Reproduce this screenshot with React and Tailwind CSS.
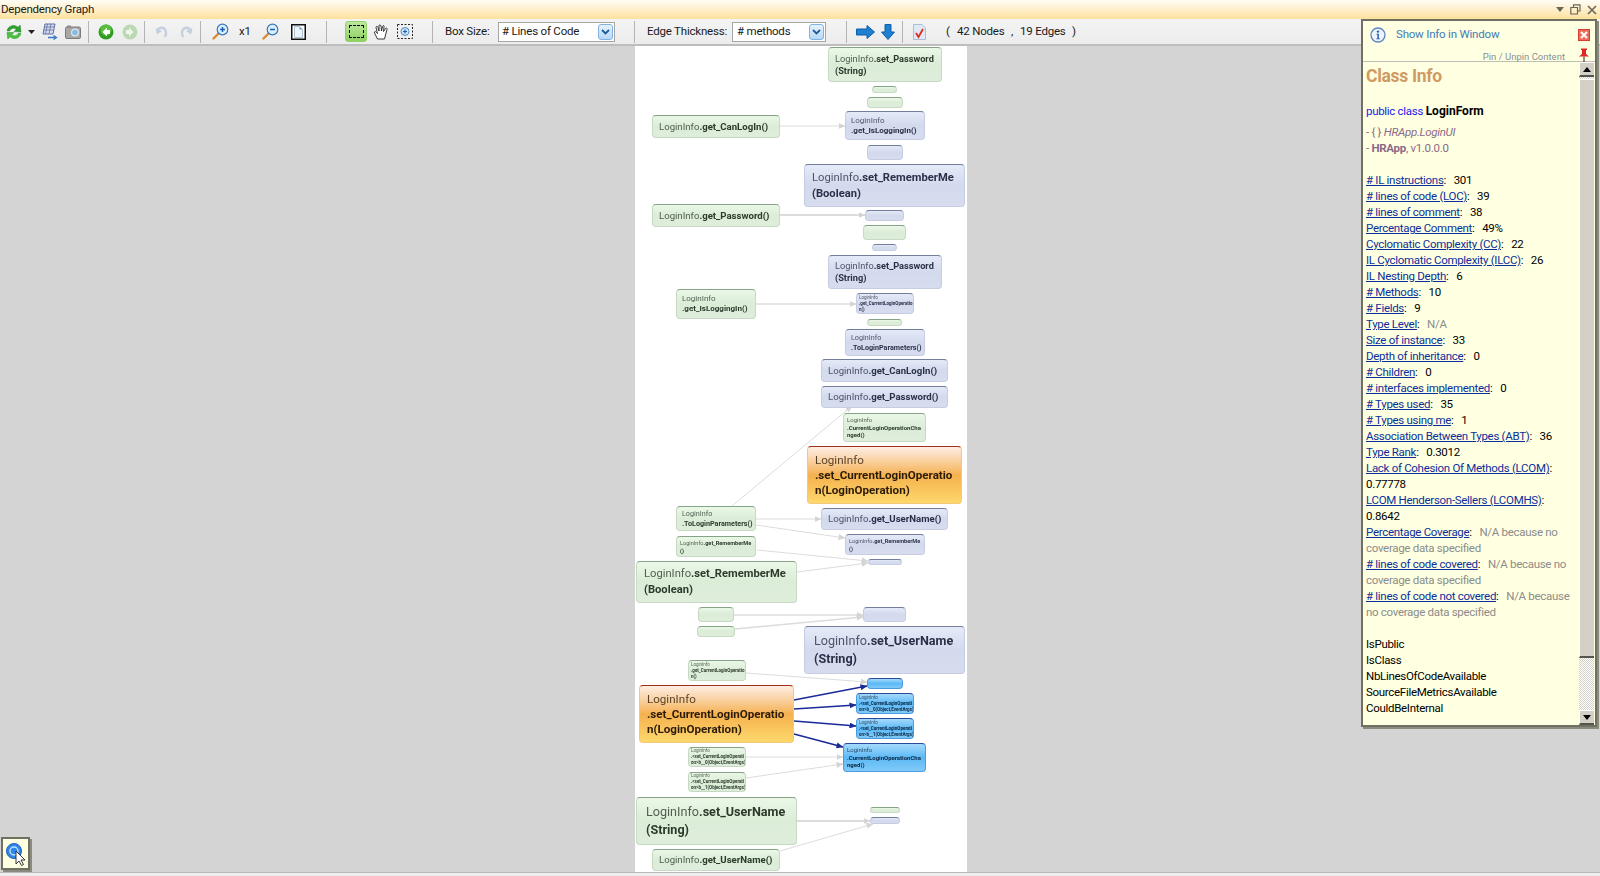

const KIND = {
  g: 'bg-linear-to-b from-[#ebf8e8] via-[#dbecd7] to-[#dfeedc] border border-[#c6dac2] border-t-[#86a386] text-[#2c3a2c]',
  b: 'bg-linear-to-b from-[#e5eaf8] via-[#d3daed] to-[#d7ddef] border border-[#c6cde3] border-t-[#737d9c] text-[#2a3048]',
  c: 'bg-linear-to-b from-[#a4dafb] via-[#5ab9f6] to-[#80caf8] border border-[#4a9be0] border-t-[#2a4a9a] text-[#0d2440]',
  o: 'bg-linear-to-b from-[#fdeee4] via-[#f5b14e] to-[#fdd86c] border border-[#f3c878] border-t-[#a0301c] text-[#2a1a08]',
};

const XL = 'text-[12.6px] leading-[18px] px-[9px]';
const L = 'text-[11.2px] leading-[16px] px-[7px]';
const O = 'text-[11.6px] leading-[15px] px-[7px]';
const M = 'text-[9.6px] leading-[12px] px-[6px]';
const P = 'text-[9.2px] leading-[12px] px-[6px]';
const S = 'text-[8px] leading-[10px] px-[5px]';
const S2 = 'text-[7.2px] leading-[10px] px-[5px]';
const T = 'text-[5.6px] leading-[8px] px-[3px]';
const U = 'text-[6px] leading-[7.5px] px-[3px]';
const V = 'text-[4.5px] leading-[6px] px-[2px]';

const nodes = [
  ['left-[828px] top-[1px] w-[114px] h-[35px]', 'g', P, 'LoginInfo.set_Password|(String)'],
  ['left-[872px] top-[40px] w-[25px] h-[7px]', 'g'],
  ['left-[867px] top-[51px] w-[36px] h-[11px]', 'g'],
  ['left-[652px] top-[69px] w-[128px] h-[23px]', 'g', M, 'LoginInfo.get_CanLogIn()'],
  ['left-[652px] top-[158px] w-[128px] h-[23px]', 'g', M, 'LoginInfo.get_Password()'],
  ['left-[863px] top-[179px] w-[43px] h-[15px]', 'g'],
  ['left-[676px] top-[243px] w-[80px] h-[30px]', 'g', S, 'LoginInfo|.get_IsLoggingIn()'],
  ['left-[867px] top-[273px] w-[35px] h-[7px]', 'g'],
  ['left-[843px] top-[367px] w-[83px] h-[29px]', 'g', U, 'LoginInfo|.CurrentLoginOperationCha|nged()'],
  ['left-[676px] top-[460px] w-[80px] h-[25px]', 'g', S2, 'LoginInfo|.ToLoginParameters()'],
  ['left-[676px] top-[490px] w-[80px] h-[21px]', 'g', T, 'LoginInfo.get_RememberMe|()'],
  ['left-[636px] top-[515px] w-[161px] h-[42px]', 'g', L, 'LoginInfo.set_RememberMe|(Boolean)'],
  ['left-[698px] top-[561px] w-[36px] h-[15px]', 'g'],
  ['left-[697px] top-[580px] w-[38px] h-[11px]', 'g'],
  ['left-[688px] top-[614px] w-[58px] h-[21px]', 'g', V, 'LoginInfo|.get_CurrentLoginOperatio|n()'],
  ['left-[688px] top-[701px] w-[58px] h-[20px]', 'g', V, 'LoginInfo|.<set_CurrentLoginOperati|on>b__0(Object,EventArgs)'],
  ['left-[688px] top-[726px] w-[58px] h-[20px]', 'g', V, 'LoginInfo|.<set_CurrentLoginOperati|on>b__1(Object,EventArgs)'],
  ['left-[636px] top-[751px] w-[161px] h-[48px]', 'g', XL, 'LoginInfo.set_UserName|(String)'],
  ['left-[870px] top-[761px] w-[30px] h-[6px]', 'g'],
  ['left-[652px] top-[803px] w-[128px] h-[22px]', 'g', M, 'LoginInfo.get_UserName()'],

  ['left-[845px] top-[65px] w-[80px] h-[29px]', 'b', S, 'LoginInfo|.get_IsLoggingIn()'],
  ['left-[867px] top-[99px] w-[36px] h-[15px]', 'b'],
  ['left-[804px] top-[118px] w-[161px] h-[43px]', 'b', L, 'LoginInfo.set_RememberMe|(Boolean)'],
  ['left-[865px] top-[164px] w-[39px] h-[11px]', 'b'],
  ['left-[872px] top-[198px] w-[25px] h-[7px]', 'b'],
  ['left-[828px] top-[209px] w-[114px] h-[34px]', 'b', P, 'LoginInfo.set_Password|(String)'],
  ['left-[856px] top-[247px] w-[58px] h-[21px]', 'b', V, 'LoginInfo|.get_CurrentLoginOperatio|n()'],
  ['left-[845px] top-[283px] w-[80px] h-[27px]', 'b', S2, 'LoginInfo|.ToLoginParameters()'],
  ['left-[821px] top-[313px] w-[127px] h-[23px]', 'b', M, 'LoginInfo.get_CanLogIn()'],
  ['left-[821px] top-[340px] w-[127px] h-[22px]', 'b', M, 'LoginInfo.get_Password()'],
  ['left-[821px] top-[462px] w-[127px] h-[22px]', 'b', M, 'LoginInfo.get_UserName()'],
  ['left-[845px] top-[488px] w-[80px] h-[21px]', 'b', T, 'LoginInfo.get_RememberMe|()'],
  ['left-[868px] top-[513px] w-[34px] h-[6px]', 'b'],
  ['left-[863px] top-[561px] w-[43px] h-[15px]', 'b'],
  ['left-[804px] top-[580px] w-[161px] h-[48px]', 'b', XL, 'LoginInfo.set_UserName|(String)'],
  ['left-[870px] top-[771px] w-[30px] h-[7px]', 'b'],

  ['left-[867px] top-[632px] w-[36px] h-[11px]', 'c'],
  ['left-[856px] top-[647px] w-[58px] h-[21px]', 'c', V, 'LoginInfo|.<set_CurrentLoginOperati|on>b__0(Object,EventArgs)'],
  ['left-[856px] top-[672px] w-[58px] h-[21px]', 'c', V, 'LoginInfo|.<set_CurrentLoginOperati|on>b__1(Object,EventArgs)'],
  ['left-[843px] top-[697px] w-[83px] h-[29px]', 'c', U, 'LoginInfo|.CurrentLoginOperationCha|nged()'],

  ['left-[807px] top-[400px] w-[155px] h-[58px]', 'o', O, 'LoginInfo|.set_CurrentLoginOperatio|n(LoginOperation)'],
  ['left-[639px] top-[639px] w-[155px] h-[58px]', 'o', O, 'LoginInfo|.set_CurrentLoginOperatio|n(LoginOperation)'],
];

const grayEdges = [
  [780, 126, 845, 126, 1],
  [780, 215, 865, 215, 2],
  [756, 304, 856, 304, 1.5],
  [732, 506, 852, 406, 1],
  [756, 519, 821, 519, 1],
  [756, 525, 845, 538, 1],
  [757, 550, 868, 561, 1],
  [797, 572, 868, 563, 1],
  [734, 615, 863, 615, 1.5],
  [735, 629, 863, 617, 1.5],
  [746, 673, 867, 682, 1],
  [746, 757, 843, 757, 1],
  [746, 778, 843, 764, 1],
  [797, 821, 870, 821, 2],
  [780, 851, 873, 824, 1],
];
const blueEdges = [
  [794, 700, 867, 686],
  [794, 709, 856, 705],
  [794, 721, 856, 726],
  [794, 734, 843, 747],
];

function Node({ pos, kind, size, text }) {
  return (
    <div className={`absolute rounded-[4px] overflow-hidden flex flex-col justify-center font-['Roboto',sans-serif] ${pos} ${KIND[kind]} ${size || ''}`}>
      {text && text.split('|').map((line, i) => {
        const m = line.startsWith('LoginInfo');
        return (
          <div key={i} className="whitespace-nowrap blur-[0.25px]">
            {m ? <span className="font-normal opacity-80">LoginInfo</span> : null}
            <span className="font-bold">{m ? line.slice(9) : line}</span>
          </div>
        );
      })}
    </div>
  );
}

function Graph() {
  return (
    <svg className="absolute left-0 top-0 w-[1600px] h-[830px] pointer-events-none" viewBox="0 46 1600 830">
      <defs>
        <marker id="ag" markerWidth="7" markerHeight="6" refX="6.5" refY="3" orient="auto" markerUnits="userSpaceOnUse">
          <path d="M0 0 L7 3 L0 6 Z" fill="#d4d4d4" />
        </marker>
        <marker id="ab" markerWidth="7" markerHeight="6" refX="6.5" refY="3" orient="auto" markerUnits="userSpaceOnUse">
          <path d="M0 0 L7 3 L0 6 Z" fill="#1a2a96" />
        </marker>
      </defs>
      {grayEdges.map(([a, b, c, d, w], i) => (
        <line key={i} x1={a} y1={b} x2={c} y2={d} stroke="#dcdcdc" strokeWidth={w} markerEnd="url(#ag)" />
      ))}
      {blueEdges.map(([a, b, c, d], i) => (
        <line key={i} x1={a} y1={b} x2={c} y2={d} stroke="#1a2a96" strokeWidth="1.6" markerEnd="url(#ab)" />
      ))}
    </svg>
  );
}

const Sep = ({ cls }) => <div className={`w-px h-[22px] bg-[#b4b4b4] shrink-0 ${cls}`} />;

function Sel({ cls, label, pad }) {
  return (
    <div className={`h-[20px] bg-white border border-[#a6a6a6] flex items-center shrink-0 justify-between ${cls}`}>
      <span className={pad}>{label}</span>
      <span className="w-[15px] h-[16px] mr-[1px] rounded-[3px] border border-[#7fb2e0] bg-linear-to-b from-[#e6f2fd] to-[#b9d8f6] flex items-center justify-center">
        <svg width="9" height="6" viewBox="0 0 9 6"><path d="M1 1 L4.5 4.5 L8 1" fill="none" stroke="#1f5c9e" strokeWidth="1.8" /></svg>
      </span>
    </div>
  );
}

const Refresh = () => (
  <svg width="16" height="16" viewBox="0 0 16 16" className="shrink-0 ml-[6px]">
    <path d="M1 7 C1.8 2 8 -0.5 12 3.2 L14.2 1 L15 8 L8 7.6 L10.2 5.2 C8 3.4 4.8 4.2 3.8 7 Z" fill="#2ea22e" stroke="#1c7a1c" strokeWidth="0.4" />
    <path d="M15 9.2 C14.2 14 8 16.5 4 12.8 L1.8 15 L1 8.4 L8 8.6 L5.8 10.8 C8 12.6 11.2 11.8 12.2 9.2 Z" fill="#47c43f" stroke="#1c7a1c" strokeWidth="0.4" />
  </svg>
);

const Magnifier = ({ cls, plus }) => (
  <svg width="17" height="17" viewBox="0 0 17 17" className={`shrink-0 ${cls}`}>
    <path d="M1.5 15.5 L6.5 10.5" stroke="#d98a2b" strokeWidth="2.4" strokeLinecap="round" />
    <circle cx="10.5" cy="6.5" r="5.3" fill="#dbeefc" stroke="#3b78b8" strokeWidth="1.2" />
    <path d="M8 6.5 H13" stroke="#1f5fb0" strokeWidth="1.5" />
    {plus && <path d="M10.5 4 V9" stroke="#1f5fb0" strokeWidth="1.5" />}
  </svg>
);

function Toolbar() {
  return (
    <div className="h-[27px] shrink-0 flex items-center bg-linear-to-b from-[#f4f4f4] to-[#ececec] border-b-2 border-[#bdbdbd] text-[11.5px] text-[#1a1a1a] font-['Roboto',sans-serif] tracking-[-0.2px]">
      <Refresh />
      <svg width="7" height="4" viewBox="0 0 7 4" className="shrink-0 ml-[6px]"><path d="M0 0 H7 L3.5 4 Z" fill="#222" /></svg>
      <svg width="17" height="17" viewBox="0 0 17 17" className="shrink-0 ml-[6px]">
        <path d="M4 1 L14 1 L12 11 L2 11 Z" fill="#d6dff2" stroke="#5f6f9f" />
        <path d="M3.4 4 H13.4 M2.8 7 H12.8 M6.5 1 L4.5 11 M10 1 L8 11" stroke="#5f6f9f" strokeWidth="0.8" />
        <path d="M7 14.5 H15 M12.5 12.5 L15.5 14.5 L12.5 16.5" fill="none" stroke="#3b78c8" strokeWidth="1.3" />
      </svg>
      <svg width="16" height="14" viewBox="0 0 16 14" className="shrink-0 ml-[7px]">
        <rect x="0.5" y="2" width="15" height="11.5" rx="1.5" fill="#a8a8a8" stroke="#7a7a7a" />
        <rect x="2" y="0.5" width="4" height="2" fill="#8c8c8c" />
        <circle cx="10" cy="7.5" r="3.4" fill="#7fbde8" stroke="#e4e4e4" strokeWidth="1.2" />
      </svg>
      <Sep cls="ml-[7px]" />
      <svg width="16" height="16" viewBox="0 0 16 16" className="shrink-0 ml-[9px]">
        <circle cx="8" cy="8" r="7.5" fill="#2f9e1f" />
        <circle cx="8" cy="6" r="5.5" fill="#59bf3f" />
        <path d="M9 3.5 L4.5 8 L9 12.5 V10 H12 V6 H9 Z" fill="#fff" />
      </svg>
      <svg width="16" height="16" viewBox="0 0 16 16" className="shrink-0 ml-[8px]">
        <circle cx="8" cy="8" r="7.5" fill="#bcd9b4" />
        <path d="M7 3.5 L11.5 8 L7 12.5 V10 H4 V6 H7 Z" fill="#eef5ea" />
      </svg>
      <Sep cls="ml-[6px]" />
      <svg width="13" height="14" viewBox="0 0 13 14" className="shrink-0 ml-[10px]">
        <path d="M3 8 C1.5 4 5 2 8 3 C11 4 12 8 10 12" fill="none" stroke="#c5d0de" strokeWidth="2.4" />
        <path d="M0.5 3 L2 9.5 L7 6 Z" fill="#c5d0de" />
      </svg>
      <svg width="13" height="14" viewBox="0 0 13 14" className="shrink-0 ml-[12px]">
        <path d="M10 8 C11.5 4 8 2 5 3 C2 4 1 8 3 12" fill="none" stroke="#c5d0de" strokeWidth="2.4" />
        <path d="M12.5 3 L11 9.5 L6 6 Z" fill="#c5d0de" />
      </svg>
      <Sep cls="ml-[7px]" />
      <Magnifier cls="ml-[11px]" plus />
      <span className="ml-[10px] w-[12px] shrink-0">x1</span>
      <Magnifier cls="ml-[11px]" />
      <svg width="15" height="16" viewBox="0 0 15 16" className="shrink-0 ml-[12px]">
        <rect x="0.75" y="0.75" width="13.5" height="14.5" fill="#fff" stroke="#111" strokeWidth="1.5" />
        <path d="M3.5 2.5 H8.5 L11.5 5.5 V13.5 H3.5 Z" fill="#eef3fa" stroke="#9fb4cc" strokeWidth="0.8" />
        <path d="M8.5 2.5 V5.5 H11.5 Z" fill="#7f9cbe" />
      </svg>
      <Sep cls="ml-[20px]" />
      <div className="shrink-0 ml-[18px] w-[22px] h-[21px] rounded-[3px] border border-[#8fd467] bg-linear-to-b from-[#bfe89f] to-[#8ed05f] flex items-center justify-center">
        <div className="w-[15px] h-[13px] border border-dashed border-black" />
      </div>
      <svg width="16" height="16" viewBox="0 0 16 16" className="shrink-0 ml-[6px]">
        <path d="M4.5 15 L1.5 9 C1 7.5 2.5 7 3.5 8.5 L4.5 9.5 L3 3.5 C3 2 4.5 2 5 3.5 L6 7 L6 2 C6 0.5 7.5 0.5 8 2 L8.5 7 L9.5 2.5 C10 1 11.5 1.5 11 3 L10.5 7.5 L12.5 4.5 C13.5 3.5 14.5 4.5 14 5.5 L12.5 11 L11.5 15 Z" fill="#fff" stroke="#222" strokeWidth="0.9" />
      </svg>
      <svg width="16" height="15" viewBox="0 0 16 15" className="shrink-0 ml-[8px]">
        <rect x="0.5" y="0.5" width="15" height="14" fill="none" stroke="#222" strokeDasharray="2 1.5" />
        <circle cx="8" cy="7.5" r="4" fill="#cfe4fa" stroke="#4d88c8" />
        <path d="M6 7.5 H10 M8 5.5 V9.5" stroke="#1f5fb0" strokeWidth="1.2" />
      </svg>
      <Sep cls="ml-[19px]" />
      <span className="ml-[12px] w-[53px] shrink-0 whitespace-nowrap">Box Size:</span>
      <Sel cls="w-[117px]" label="# Lines of Code" pad="pl-[3px]" />
      <Sep cls="ml-[19px]" />
      <span className="ml-[12px] w-[85px] shrink-0 whitespace-nowrap">Edge Thickness:</span>
      <Sel cls="w-[94px]" label="# methods" pad="pl-[4px]" />
      <Sep cls="ml-[20px]" />
      <svg width="19" height="14" viewBox="0 0 19 14" className="shrink-0 ml-[9px]">
        <path d="M0.5 4 H11 V0.5 L18.5 7 L11 13.5 V10 H0.5 Z" fill="#1f7fd0" stroke="#0f5ca8" />
      </svg>
      <svg width="14" height="16" viewBox="0 0 14 16" className="shrink-0 ml-[6px]">
        <path d="M4 0.5 H10 V8 H13.5 L7 15.5 L0.5 8 H4 Z" fill="#1f7fd0" stroke="#0f5ca8" />
      </svg>
      <Sep cls="ml-[7px]" />
      <svg width="13" height="16" viewBox="0 0 13 16" className="shrink-0 ml-[10px]">
        <path d="M0.5 0.5 H9 L12.5 4 V15.5 H0.5 Z" fill="#dfe9f6" stroke="#a9bdd6" />
        <path d="M3 9 L5.5 13 L10 5" fill="none" stroke="#e02a1c" strokeWidth="1.8" />
      </svg>
      <div className="flex items-center whitespace-nowrap">
        <span className="ml-[20px] w-[6px]">(</span>
        <span className="ml-[5px] w-[50px]">42 Nodes</span>
        <span className="ml-[4px] w-[3px]">,</span>
        <span className="ml-[6px] w-[48px]">19 Edges</span>
        <span className="ml-[4px]">)</span>
      </div>
    </div>
  );
}

const Link = ({ children }) => <a className="text-[#0b2f9c] underline">{children}</a>;

const metrics = [
  ['# IL instructions', '301'],
  ['# lines of code (LOC)', '39'],
  ['# lines of comment', '38'],
  ['Percentage Comment', '49%'],
  ['Cyclomatic Complexity (CC)', '22'],
  ['IL Cyclomatic Complexity (ILCC)', '26'],
  ['IL Nesting Depth', '6'],
  ['# Methods', '10'],
  ['# Fields', '9'],
  ['Type Level', 'N/A', true],
  ['Size of instance', '33'],
  ['Depth of inheritance', '0'],
  ['# Children', '0'],
  ['# interfaces implemented', '0'],
  ['# Types used', '35'],
  ['# Types using me', '1'],
  ['Association Between Types (ABT)', '36'],
  ['Type Rank', '0.3012'],
  ['Lack of Cohesion Of Methods (LCOM)', '0.77778'],
  ['LCOM Henderson-Sellers (LCOMHS)', '0.8642'],
  ['Percentage Coverage', 'N/A because no coverage data specified', true],
  ['# lines of code covered', 'N/A because no coverage data specified', true],
  ['# lines of code not covered', 'N/A because no coverage data specified', true],
];

function InfoPanel() {
  return (
    <div className="absolute left-[1361px] top-[19px] w-[236px] h-[708px] bg-[#ffffe1] border-2 border-[#6f6f62] shadow-[2px_2px_0_#8a8a80] flex flex-col font-['Roboto',sans-serif] overflow-hidden">
      <div className="h-[41px] shrink-0 relative border-b border-[#bdbdb5]">
        <div className="flex items-center pl-[7px] pt-[3px] h-[24px]">
          <svg width="16" height="16" viewBox="0 0 16 16">
            <circle cx="8" cy="8" r="7" fill="#eef4fc" stroke="#5c84c4" strokeWidth="1.3" />
            <circle cx="8" cy="4.6" r="1.2" fill="#2b5fae" />
            <path d="M6.6 6.8 H8.9 V11.4 H10 V12.3 H6.3 V11.4 H7.4 V7.7 H6.6 Z" fill="#2b5fae" />
          </svg>
          <span className="ml-[10px] text-[11.5px] tracking-[-0.2px] text-[#3d7db8]">Show Info in Window</span>
        </div>
        <div className="absolute right-[5px] top-[8px] w-[12px] h-[12px] bg-[#ee6a5c] border border-[#d04030] flex items-center justify-center">
          <svg width="8" height="8" viewBox="0 0 8 8"><path d="M1 1 L7 7 M7 1 L1 7" stroke="#fff" strokeWidth="2" /></svg>
        </div>
        <div className="absolute right-[30px] top-[30px] text-[9.5px] leading-[11px] text-[#8a8f96]">Pin / Unpin Content</div>
        <svg width="12" height="14" viewBox="0 0 12 14" className="absolute right-[5px] top-[27px]">
          <path d="M3 0.5 H9 V2 H8 V6 L11 8.5 H1 L4 6 V2 H3 Z" fill="#e02626" />
          <path d="M6 8.5 V14" stroke="#222" strokeWidth="1" />
        </svg>
      </div>
      <div className="flex-1 flex min-h-0">
        <div className="flex-1 pl-[3px] overflow-hidden text-[11.5px] tracking-[-0.3px] leading-[16px] text-black">
          <div className="text-[17.5px] leading-[22px] mt-[3px] font-bold text-[#d09a63]">Class Info</div>
          <div className="mt-[16px]"><span className="text-[#1a1aee]">public class </span><span className="font-bold text-[12px] tracking-normal">LoginForm</span></div>
          <div className="mt-[5px] text-[#8a6a8a]">- {'{ }'} <i>HRApp.LoginUI</i></div>
          <div className="text-[#8a6a8a]">- <b>HRApp</b>, v1.0.0.0</div>
          <div className="mt-[16px]">
            {metrics.map(([k, v, muted]) => (
              <div key={k} className="pr-[2px]">
                <Link>{k}</Link>:&nbsp;&nbsp; <span className={muted ? 'text-[#8c8c8c]' : ''}>{v}</span>
              </div>
            ))}
          </div>
          <div className="mt-[16px]">
            <div>IsPublic</div>
            <div>IsClass</div>
            <div>NbLinesOfCodeAvailable</div>
            <div>SourceFileMetricsAvailable</div>
            <div>CouldBeInternal</div>
          </div>
        </div>
        <div className="w-[15px] shrink-0 mr-[1px] flex flex-col bg-[repeating-conic-gradient(#d4d0c8_0_25%,#ffffff_0_50%)] bg-[length:2px_2px]">
          <div className="h-[15px] shrink-0 bg-[#d4d0c8] border-b-2 border-[#55554d] border-t border-l border-t-white border-l-white flex items-center justify-center">
            <svg width="8" height="5" viewBox="0 0 8 5"><path d="M4 0 L8 5 H0 Z" fill="#000" /></svg>
          </div>
          <div className="h-[579px] mt-[2px] shrink-0 bg-[#d4d0c8] border-b-2 border-[#55554d] border-t border-l border-t-white border-l-white" />
          <div className="h-[15px] mt-auto shrink-0 bg-[#d4d0c8] border-b-2 border-[#55554d] border-t border-l border-t-white border-l-white flex items-center justify-center">
            <svg width="8" height="5" viewBox="0 0 8 5"><path d="M0 0 H8 L4 5 Z" fill="#000" /></svg>
          </div>
        </div>
      </div>
    </div>
  );
}

export default function App() {
  return (
    <div className="relative w-[1600px] h-[876px] overflow-hidden flex flex-col bg-[#d4d4d4] font-['Roboto',sans-serif]">
      <div className="h-[19px] shrink-0 flex items-center justify-between bg-linear-to-b from-[#fffdf6] to-[#fde19c] text-[11.5px] tracking-[-0.2px] text-[#1a1a1a] pl-[1px] pr-[3px]">
        <span>Dependency Graph</span>
        <div className="flex items-center gap-[6px]">
          <svg width="8" height="5" viewBox="0 0 8 5"><path d="M0 0 H8 L4 5 Z" fill="#6b6658" /></svg>
          <svg width="11" height="11" viewBox="0 0 11 11"><path d="M3.5 3 V0.8 H10 V7 H7.5 M0.8 3.5 H7.5 V10 H0.8 Z" fill="none" stroke="#6b6658" strokeWidth="1.2" /></svg>
          <svg width="10" height="10" viewBox="0 0 10 10"><path d="M1 1 L9 9 M9 1 L1 9" stroke="#6b6658" strokeWidth="1.6" /></svg>
        </div>
      </div>
      <Toolbar />
      <div className="relative flex-1 min-h-0">
        <div className="ml-[635px] w-[332px] h-[826px] bg-white" />
        <Graph />
        {nodes.map(([pos, kind, size, text], i) => (
          <Node key={i} pos={pos} kind={kind} size={size} text={text} />
        ))}
        <div className="absolute left-0 bottom-0 w-full h-[4px] bg-[#eeeeee] border-t border-[#b8b8b8]" />
        <div className="absolute left-[1px] top-[791px] w-[29px] h-[33px] bg-[#ffffe1] border-2 border-[#6f6f62] shadow-[2px_2px_0_#8a8a80] flex items-center justify-center">
          <svg width="22" height="24" viewBox="0 0 22 24">
            <circle cx="9" cy="9" r="7.5" fill="#2f86e8" stroke="#1a5fc0" />
            <circle cx="9" cy="9" r="4" fill="none" stroke="#bfe0ff" strokeWidth="1.4" />
            <path d="M11 9 L11 22 L14 19 L16.5 23.5 L18.5 22.5 L16 18 L20 18 Z" fill="#fff" stroke="#222" strokeWidth="0.9" />
          </svg>
        </div>
      </div>
      <InfoPanel />
    </div>
  );
}
